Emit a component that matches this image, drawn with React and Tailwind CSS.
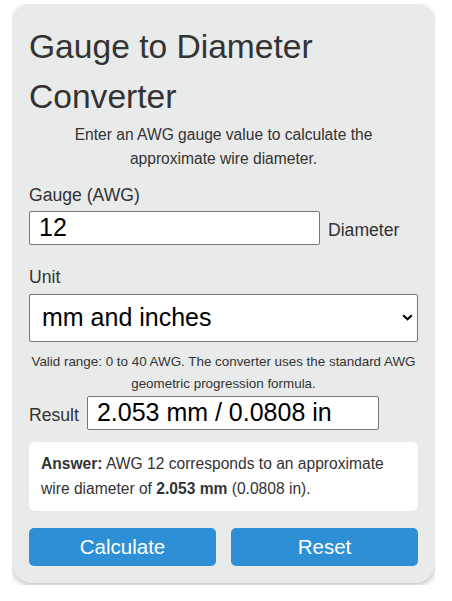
import React from "react";

export default function App() {
  return (
    <div className="bg-white w-[452px] h-[601px] pt-[4px] pl-[12px] font-['Liberation_Sans',Arial,sans-serif]">
      <div className="w-[423px] h-[581px] overflow-hidden">
        <div className="bg-[#e9eaea] rounded-[20px] shadow-[0_2px_6px_rgba(0,0,0,0.28)] px-[17px] pt-[18px] pb-[17px] text-[#333]">
          <h1 className="text-[33.6px] leading-[50.4px] font-normal text-[#333]">
            Gauge to Diameter Converter
          </h1>
          <p className="text-center text-[15.6px] leading-[24.2px] px-[20px]">
            Enter an AWG gauge value to calculate the approximate wire diameter.
          </p>

          <div className="mt-[12px] mb-[4px] text-[17.6px] leading-[24px]">Gauge (AWG)</div>
          <div className="flex items-baseline gap-[8px]">
            <input
              readOnly
              value="12"
              className="w-[291px] h-[34px] border border-[#767676] rounded-[2px] bg-white px-[9px] text-[25px] text-black outline-none"
            />
            <span className="text-[17.6px] leading-[24px]">Diameter</span>
          </div>

          <div className="mt-[20px] mb-[5px] text-[17.6px] leading-[24px]">Unit</div>
          <div className="relative">
            <select
              value="both"
              onChange={() => {}}
              className="appearance-none w-full h-[48px] border border-[#767676] rounded-[2px] bg-white pl-[12px] text-[25px] text-black outline-none"
            >
              <option value="both">mm and inches</option>
              <option value="mm">mm</option>
              <option value="in">inches</option>
            </select>
            <svg
              className="absolute right-[5px] top-[20px] pointer-events-none"
              width="11"
              height="7"
              viewBox="0 0 11 7"
            >
              <path d="M1.2 1.2 L5.5 5.3 L9.8 1.2" fill="none" stroke="#000" strokeWidth="2.1" />
            </svg>
          </div>

          <p className="mt-[9px] text-center text-[13.4px] leading-[21.4px]">
            Valid range: 0 to 40 AWG. The converter uses the standard AWG geometric progression formula.
          </p>

          <div className="mt-[2px] flex items-baseline gap-[8px]">
            <span className="text-[17.6px] leading-[24px]">Result</span>
            <input
              readOnly
              value="2.053 mm / 0.0808 in"
              className="w-[292px] h-[34px] border border-[#767676] rounded-[2px] bg-white px-[9px] text-[25px] text-black outline-none"
            />
          </div>

          <div className="mt-[12px] bg-white rounded-[6px] px-[12px] py-[10px] text-[15.6px] leading-[24.5px] text-[#333]">
            <strong className="font-bold">Answer:</strong> AWG 12 corresponds to an approximate wire diameter of{" "}
            <strong className="font-bold">2.053 mm</strong> (0.0808 in).
          </div>

          <div className="mt-[17px] grid grid-cols-2 gap-[15px]">
            <button className="h-[38px] rounded-[5px] bg-[#2d8fd6] text-white text-[20.5px]">Calculate</button>
            <button className="h-[38px] rounded-[5px] bg-[#2d8fd6] text-white text-[20.5px]">Reset</button>
          </div>
        </div>
      </div>
    </div>
  );
}
